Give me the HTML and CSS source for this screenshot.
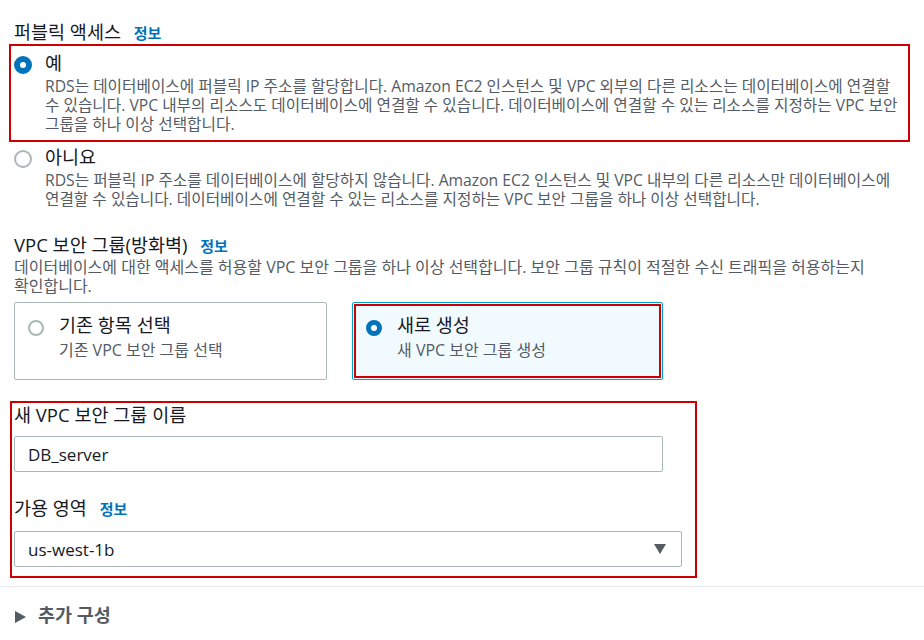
FILE: index.html
```html
<!DOCTYPE html>
<html lang="ko">
<head>
    <meta charset="UTF-8">
    <meta name="viewport" content="width=device-width, initial-scale=1.0">
    <title>데이터베이스 생성 - 연결</title>
    <link rel="stylesheet" href="styles.css">
</head>
<body>
    <div class="page">
        <section class="field">
            <div class="field-label">퍼블릭 액세스 <a class="info" href="#">정보</a></div>

            <div class="mark">
                <div class="radio-row">
                    <span class="radio checked"></span>
                    <div class="radio-text">
                        <div class="radio-label">예</div>
                        <div class="radio-desc">RDS는 데이터베이스에 퍼블릭 IP 주소를 할당합니다. Amazon EC2 인스턴스 및 VPC 외부의 다른 리소스는 데이터베이스에 연결할 수 있습니다. VPC 내부의 리소스도 데이터베이스에 연결할 수 있습니다. 데이터베이스에 연결할 수 있는 리소스를 지정하는 VPC 보안 그룹을 하나 이상 선택합니다.</div>
                    </div>
                </div>
            </div>

            <div class="radio-row plain">
                <span class="radio"></span>
                <div class="radio-text">
                    <div class="radio-label">아니요</div>
                    <div class="radio-desc">RDS는 퍼블릭 IP 주소를 데이터베이스에 할당하지 않습니다. Amazon EC2 인스턴스 및 VPC 내부의 다른 리소스만 데이터베이스에 연결할 수 있습니다. 데이터베이스에 연결할 수 있는 리소스를 지정하는 VPC 보안 그룹을 하나 이상 선택합니다.</div>
                </div>
            </div>
        </section>

        <section class="field vpc">
            <div class="field-label">VPC 보안 그룹(방화벽) <a class="info" href="#">정보</a></div>
            <div class="field-desc">데이터베이스에 대한 액세스를 허용할 VPC 보안 그룹을 하나 이상 선택합니다. 보안 그룹 규칙이 적절한 수신 트래픽을 허용하는지 확인합니다.</div>

            <div class="tiles">
                <div class="tile">
                    <span class="radio"></span>
                    <div class="radio-text">
                        <div class="radio-label">기존 항목 선택</div>
                        <div class="tile-desc">기존 VPC 보안 그룹 선택</div>
                    </div>
                </div>
                <div class="tile selected">
                    <span class="radio checked"></span>
                    <div class="radio-text">
                        <div class="radio-label">새로 생성</div>
                        <div class="tile-desc">새 VPC 보안 그룹 생성</div>
                    </div>
                </div>
            </div>
        </section>

        <div class="mark form-mark">
            <div class="field-label">새 VPC 보안 그룹 이름</div>
            <input class="text-input" type="text" value="DB_server">

            <div class="field-label zone-label">가용 영역 <a class="info" href="#">정보</a></div>
            <div class="select">
                <span>us-west-1b</span>
                <svg class="caret" width="12" height="10" viewBox="0 0 12 10"><path d="M0 0 H12 L6 10 Z" fill="#545b64"/></svg>
            </div>
        </div>

        <hr class="divider">

        <div class="expander">
            <svg class="expander-icon" width="11" height="12" viewBox="0 0 11 12"><path d="M0 0 L11 6 L0 12 Z" fill="#545b64"/></svg>
            <span>추가 구성</span>
        </div>
    </div>
</body>
</html>
```

FILE: styles.css
```css
body {
    margin: 0;
    background-color: #fff;
    color: #16191f;
    font-family: "Open Sans", "Noto Sans CJK KR", sans-serif;
}

.page {
    padding: 21px 14px 0;
}

.field-label {
    font-size: 18.5px;
    line-height: 22px;
}

.info {
    margin-left: 8px;
    font-size: 15px;
    font-weight: bold;
    color: #0073bb;
    text-decoration: none;
}

/* red annotation boxes */
.mark {
    margin-left: -5px;
    border: 2px solid #c00;
    padding: 6px 3px 6px 3px;
}

.radio-row {
    display: flex;
}

.radio-row.plain {
    margin-top: 4px;
    padding-right: 12px;
}

.radio {
    flex: none;
    box-sizing: border-box;
    width: 18px;
    height: 18px;
    margin: 4px 13px 0 0;
    border: 2px solid #aab7b8;
    border-radius: 50%;
    background-color: #fff;
}

.radio.checked {
    border: 6px solid #0073bb;
}

.radio-label {
    font-size: 18.5px;
    line-height: 22px;
}

.radio-desc {
    margin-top: 3px;
    font-size: 15.7px;
    line-height: 19px;
    color: #545b64;
}

.vpc {
    margin-top: 25px;
}

.field-desc {
    max-width: 860px;
    margin-top: 1px;
    font-size: 16px;
    line-height: 19px;
    color: #545b64;
}

.tiles {
    display: grid;
    grid-template-columns: 313px 311px;
    gap: 25px;
    margin-top: 6px;
}

.tile {
    display: flex;
    box-sizing: border-box;
    height: 78px;
    padding: 11px 13px;
    border: 1px solid #aab7b8;
    border-radius: 2px;
}

.tile .radio {
    width: 16px;
    height: 16px;
    margin: 6px 15px 0 0;
}

.tile .radio.checked {
    border-width: 5px;
}

.tile.selected {
    border-color: #00a1c9;
    background-color: #f1faff;
    outline: 2px solid #c00;
    outline-offset: -4px;
}

.tile-desc {
    margin-top: 5px;
    font-size: 16px;
    line-height: 19px;
    color: #545b64;
}

.form-mark {
    width: 687px;
    box-sizing: border-box;
    margin-top: 21px;
    margin-left: -4px;
    padding: 1px 13px 9px 2px;
}

.text-input {
    display: block;
    box-sizing: border-box;
    width: 649px;
    height: 36px;
    margin: 10px 0 0;
    padding: 0 13px;
    border: 1px solid #aab7b8;
    border-radius: 2px;
    font-family: inherit;
    font-size: 17px;
    color: #16191f;
}

.zone-label {
    margin-top: 25px;
}

.select {
    display: flex;
    align-items: center;
    justify-content: space-between;
    box-sizing: border-box;
    height: 36px;
    margin-top: 11px;
    padding: 0 15px 0 13px;
    border: 1px solid #aab7b8;
    border-radius: 2px;
    font-size: 17px;
}

.divider {
    margin: 8px -14px 0;
    border: 0;
    border-top: 1px solid #eaeded;
}

.expander {
    display: flex;
    align-items: center;
    gap: 12px;
    margin-top: 17px;
    padding-left: 1px;
    font-size: 18.5px;
    line-height: 22px;
    font-weight: bold;
    color: #545b64;
}

.expander-icon {
    margin-top: 4px;
}
```
